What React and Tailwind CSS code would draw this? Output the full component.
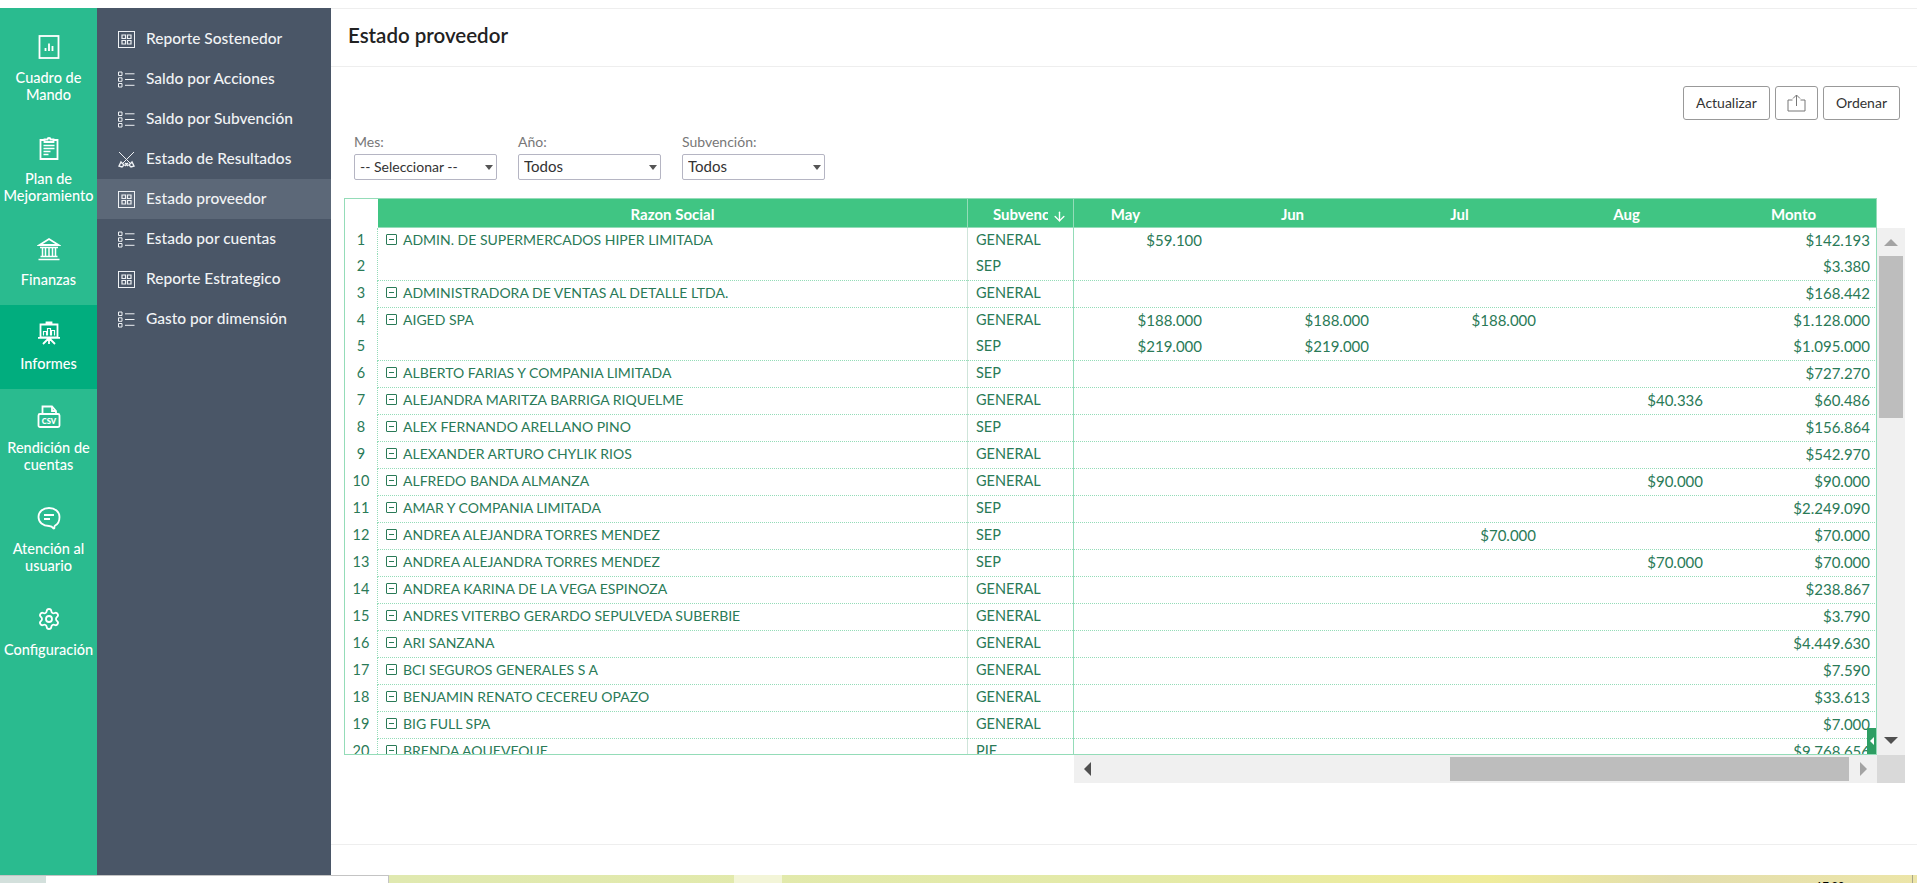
import { ArrowDown, Settings } from 'lucide-react'

// -- Data --------------------------------------------------------------

const NAV = [
  { label: ['Cuadro de', 'Mando'], icon: 'chart' },
  { label: ['Plan de', 'Mejoramiento'], icon: 'clipboard' },
  { label: ['Finanzas'], icon: 'bank' },
  { label: ['Informes'], icon: 'board', active: true },
  { label: ['Rendición de', 'cuentas'], icon: 'csv' },
  { label: ['Atención al', 'usuario'], icon: 'chat' },
  { label: ['Configuración'], icon: 'gear' },
]

const SUBMENU = [
  { label: 'Reporte Sostenedor', icon: 'grid' },
  { label: 'Saldo por Acciones', icon: 'list' },
  { label: 'Saldo por Subvención', icon: 'list' },
  { label: 'Estado de Resultados', icon: 'swords' },
  { label: 'Estado proveedor', icon: 'grid', active: true },
  { label: 'Estado por cuentas', icon: 'list' },
  { label: 'Reporte Estrategico', icon: 'grid' },
  { label: 'Gasto por dimensión', icon: 'list' },
]

// name, subvencion, may, jun, jul, aug, monto, line under the row
const ROWS = [
  ['ADMIN. DE SUPERMERCADOS HIPER LIMITADA', 'GENERAL', '$59.100', '', '', '', '$142.193', false],
  ['', 'SEP', '', '', '', '', '$3.380', true],
  ['ADMINISTRADORA DE VENTAS AL DETALLE LTDA.', 'GENERAL', '', '', '', '', '$168.442', true],
  ['AIGED SPA', 'GENERAL', '$188.000', '$188.000', '$188.000', '', '$1.128.000', false],
  ['', 'SEP', '$219.000', '$219.000', '', '', '$1.095.000', true],
  ['ALBERTO FARIAS Y COMPANIA LIMITADA', 'SEP', '', '', '', '', '$727.270', true],
  ['ALEJANDRA MARITZA BARRIGA RIQUELME', 'GENERAL', '', '', '', '$40.336', '$60.486', true],
  ['ALEX FERNANDO ARELLANO PINO', 'SEP', '', '', '', '', '$156.864', true],
  ['ALEXANDER ARTURO CHYLIK RIOS', 'GENERAL', '', '', '', '', '$542.970', true],
  ['ALFREDO BANDA ALMANZA', 'GENERAL', '', '', '', '$90.000', '$90.000', true],
  ['AMAR Y COMPANIA LIMITADA', 'SEP', '', '', '', '', '$2.249.090', true],
  ['ANDREA ALEJANDRA TORRES MENDEZ', 'SEP', '', '', '$70.000', '', '$70.000', true],
  ['ANDREA ALEJANDRA TORRES MENDEZ', 'SEP', '', '', '', '$70.000', '$70.000', true],
  ['ANDREA KARINA DE LA VEGA ESPINOZA', 'GENERAL', '', '', '', '', '$238.867', true],
  ['ANDRES VITERBO GERARDO SEPULVEDA SUBERBIE', 'GENERAL', '', '', '', '', '$3.790', true],
  ['ARI SANZANA', 'GENERAL', '', '', '', '', '$4.449.630', true],
  ['BCI SEGUROS GENERALES S A', 'GENERAL', '', '', '', '', '$7.590', true],
  ['BENJAMIN RENATO CECEREU OPAZO', 'GENERAL', '', '', '', '', '$33.613', true],
  ['BIG FULL SPA', 'GENERAL', '', '', '', '', '$7.000', true],
  ['BRENDA AQUEVEQUE', 'PIE', '', '', '', '', '$9.768.656', true],
]

// -- Icons -------------------------------------------------------------

function NavIcon({ name }) {
  if (name === 'gear') return <Settings size={24} strokeWidth={1.8} className="text-white" />
  const common = { width: 24, height: 24, viewBox: '0 0 24 24', fill: 'none', stroke: 'white', strokeWidth: 1.8 }
  if (name === 'chart') return (
    <svg {...common}>
      <rect x="2.500" y="1" width="19" height="22" />
      <path d="M8.500 16v-3M12 16V8.500M15.500 16v-5" />
    </svg>
  )
  if (name === 'clipboard') return (
    <svg {...common}>
      <path d="M7.500 4H3.500v19h17V4h-4" />
      <path d="M7.500 6V3.500h3a1.500 1.500 0 0 1 3 0h3V6z" />
      <path d="M6.500 9.500h11M6.500 12.500h11M6.500 15.500h7M6.500 18.500h5" strokeWidth="1.400" />
    </svg>
  )
  if (name === 'bank') return (
    <svg {...common}>
      <path d="M2.500 8 12 2l9.500 6z" />
      <path d="M3 10.500h18M5.500 11v8M8.500 11v8M12 11v8M15.500 11v8M18.500 11v8M3.500 19.500h17M1.500 22.500h21" strokeWidth="1.500" />
    </svg>
  )
  if (name === 'board') return (
    <svg {...common}>
      <path d="M9.500 3.500V1.500h5v2M3.500 3.500h17v13h-17zM1 16.800h22M12 17v6M11.500 17.500 6 23M12.500 17.500 18 23" />
      <path d="M6.500 14.500v-4h3v4M10.500 14.500v-7h3v7M14.500 14.500v-5h3v5" strokeWidth="1.200" />
    </svg>
  )
  if (name === 'csv') return (
    <svg {...common}>
      <path d="M5.500 9V1.500H15L19 6v3" />
      <path d="M15 1.500V6h4" />
      <rect x="1.500" y="9" width="21" height="13" rx="1.500" />
      <text x="12" y="18.500" textAnchor="middle" fontSize="7.500" fontWeight="800" fill="white" stroke="none" fontFamily="Lato, sans-serif">CSV</text>
    </svg>
  )
  return (
    <svg {...common}>
      <path d="M12 2C6 2 1.500 5.500 1.500 11S6 20 12 20c1.800 0 3 .2 4.500 2.500.6 .2 1-.2 .9-1 -.1-.8 0-1.500 .8-2C21 18 22.500 15 22.500 11 22.500 5.500 18 2 12 2z" />
      <path d="M7 9h10M7 13h6" />
    </svg>
  )
}

function SubIcon({ name }) {
  const common = { width: 17, height: 17, viewBox: '0 0 17 17', fill: 'none', stroke: '#eef1f4', strokeWidth: 1 }
  if (name === 'grid') return (
    <svg {...common}>
      <rect x="0.500" y="0.500" width="16" height="16" />
      <path d="M4 4h3.500v3.500H4zM9.500 4H13v3.500H9.500zM4 9.500h3.500V13H4zM9.500 9.500H13V13H9.500z" strokeWidth="1.200" />
    </svg>
  )
  if (name === 'list') return (
    <svg {...common}>
      <path d="M.500 1h3.500v3.500H.500zM.500 6.800h3.500v3.500H.500zM.500 12.500h3.500V16H.500z" />
      <path d="M7 2.800h9.500M7 8.500h9.500M7 14.300h9.500" />
    </svg>
  )
  return (
    <svg {...common}>
      <path d="M1 1l11 11M16 1 5 12" />
      <path d="M3 11l3 3-2 2-3-1zM14 11l-3 3 2 2 3-1zM7 12l3 3M10 12l-3 3" strokeWidth="1.400" />
    </svg>
  )
}

function ExpandBox() {
  return (
    <svg width="11" height="11" viewBox="0 0 11 11" fill="none" stroke="#2a7a57" strokeWidth="1" className="shrink-0">
      <rect x="0.500" y="0.500" width="10" height="10" rx="0.500" />
      <path d="M3 5.500h5" />
    </svg>
  )
}

// -- Sidebars ----------------------------------------------------------

function MainNav() {
  return (
    <nav className="w-[97px] shrink-0 bg-[#2abb8f] pt-[11px] text-white">
      {NAV.map(item => (
        <div
          key={item.label[0]}
          className={`flex flex-col items-center pt-[17px] pb-[17px] ${item.active ? 'bg-[#01ad7e]' : ''}`}
        >
          <div className="h-[22px] flex items-center justify-center"><NavIcon name={item.icon} /></div>
          <div className="mt-[11px] text-[14.500px] font-medium leading-[17px] text-center whitespace-nowrap">
            {item.label.map(l => <div key={l}>{l}</div>)}
          </div>
        </div>
      ))}
    </nav>
  )
}

function SubNav() {
  return (
    <aside className="w-[234px] shrink-0 bg-[#4a5667] pt-[11px] text-[#f1f3f5]">
      {SUBMENU.map(item => (
        <div
          key={item.label}
          className={`h-[40px] flex items-center pl-[21px] gap-[11px] text-[15.500px] font-medium ${item.active ? 'bg-[#5c6878]' : ''}`}
        >
          <SubIcon name={item.icon} />
          <span>{item.label}</span>
        </div>
      ))}
    </aside>
  )
}

// -- Filters -----------------------------------------------------------

function Filter({ label, value, small }) {
  return (
    <label className="block w-[143px]">
      <span className="block text-[14px] leading-[15px] text-[#777]">{label}</span>
      <span className="relative block mt-[5px]">
        <select
          defaultValue={value}
          className={`block w-full h-[26px] appearance-none bg-white border border-[#b5b5c3] rounded-[2px] text-[#333] pb-[2px] pl-[5px] ${small ? 'text-[14px]' : 'text-[15px]'}`}
        >
          <option>{value}</option>
        </select>
        <span className="absolute right-[4px] top-[11px] w-0 h-0 border-x-[4.500px] border-x-transparent border-t-[5px] border-t-[#555]" />
      </span>
    </label>
  )
}

// -- Table -------------------------------------------------------------

function Table() {
  return (
    <div className="mt-[18px] ml-[13px] w-[1561px]">
      <div className="flex h-[557px] overflow-hidden">
        {/* frozen columns */}
        <div className="w-[730px] shrink-0 border-[1.500px] border-[#94dcb8] overflow-hidden">
          <div className="flex h-[28.500px]">
            <div className="w-[33px] shrink-0 bg-white" />
            <div className="flex-1 bg-[#40c583] text-white font-bold text-[15px] pt-[2px] flex items-center justify-center border-b-[1.500px] border-[#94dcb8]">Razon Social</div>
            <div className="w-[106px] shrink-0 bg-[#40c583] text-white font-bold text-[15px] pt-[2px] flex items-center pl-[25px] pr-[5px] border-l-[1.500px] border-b-[1.500px] border-[#94dcb8]">
              <span className="w-[55px] overflow-hidden whitespace-nowrap">Subvención</span>
              <ArrowDown size={15} strokeWidth={2.200} className="ml-[4px] mt-[5px] shrink-0" />
            </div>
          </div>
          {ROWS.map((r, i) => (
            <div key={i} className={`flex text-[14px] text-[#2a7a57] ${r[7] ? 'h-[27px]' : 'h-[26px]'}`}>
              <div className="w-[33px] shrink-0 text-center leading-[24px] text-[14.500px] border-r border-dotted border-[#94dcb8]">{i + 1}</div>
              <div className={`flex-1 flex items-center gap-[6px] pl-[8px] pb-[2px] whitespace-nowrap h-full ${r[7] ? 'border-b border-dotted border-[#94dcb8]' : ''}`}>
                {r[0] && <ExpandBox />}
                <span>{r[0]}</span>
              </div>
              <div className={`w-[106px] shrink-0 flex items-center pl-[8px] pb-[2px] text-[14.500px] border-l border-[#cfe5da] ${r[7] ? 'border-b-[1px] border-b-[#94dcb8] [border-bottom-style:dotted]' : ''}`}>{r[1]}</div>
            </div>
          ))}
        </div>

        {/* scrolling columns */}
        <div className="w-[803px] shrink-0 border-r-[1.500px] border-t-[1.500px] border-b-[1.500px] border-[#94dcb8] overflow-hidden relative">
          <div className="-ml-[32px] w-[835px]">
            <div className="grid grid-cols-[167px_167px_167px_167px_167px] h-[28.500px] bg-[#40c583] text-white font-bold text-[15px] pt-[2px] border-b-[1.500px] border-[#94dcb8]">
              {['May', 'Jun', 'Jul', 'Aug', 'Monto'].map(m => (
                <div key={m} className="flex items-center justify-center">{m}</div>
              ))}
            </div>
            {ROWS.map((r, i) => (
              <div
                key={i}
                className={`grid grid-cols-[167px_167px_167px_167px_167px] text-[15px] text-[#2a7a57] text-right ${r[7] ? 'h-[27px] border-b border-dotted border-[#94dcb8]' : 'h-[26px]'}`}
              >
                {[2, 3, 4, 5, 6].map(c => (
                  <div key={c} className="pr-[7px] leading-[24px]">{r[c]}</div>
                ))}
              </div>
            ))}
          </div>
          <div className="absolute right-0 bottom-0 w-[9px] h-[26px] bg-[#2e9e63] flex items-center justify-center">
            <span className="w-0 h-0 border-y-[4px] border-y-transparent border-r-[4px] border-r-white" />
          </div>
        </div>

        {/* vertical scrollbar */}
        <div className="w-[28px] shrink-0 mt-[30px] bg-[#f0f0f0] flex flex-col items-center">
          <div className="h-[28px] flex items-center justify-center">
            <span className="w-0 h-0 border-x-[7px] border-x-transparent border-b-[7px] border-b-[#a3a3a3]" />
          </div>
          <div className="w-[24px] h-[162px] bg-[#bdbdbd]" />
          <div className="flex-1 w-full flex items-end justify-center pb-[11px]">
            <span className="w-0 h-0 border-x-[7px] border-x-transparent border-t-[7px] border-t-[#505050]" />
          </div>
        </div>
      </div>

      {/* horizontal scrollbar */}
      <div className="flex h-[28px] ml-[730px]">
        <div className="w-[803px] bg-[#f0f0f0] flex items-center">
          <span className="ml-[10px] w-0 h-0 border-y-[7px] border-y-transparent border-r-[7px] border-r-[#505050]" />
          <div className="ml-[359px] w-[399px] h-[24px] bg-[#bdbdbd]" />
          <span className="ml-[11px] w-0 h-0 border-y-[7px] border-y-transparent border-l-[7px] border-l-[#a3a3a3]" />
        </div>
        <div className="w-[28px] bg-[#d9d9d9]" />
      </div>
    </div>
  )
}

// -- Page --------------------------------------------------------------

export default function App() {
  return (
    <div className="w-[1917px] h-[883px] overflow-hidden bg-white pt-[8px] flex flex-col [font-family:Lato,sans-serif]">
      <div className="flex h-[867px]">
        <MainNav />
        <SubNav />
        <main className="flex-1 min-w-0 flex flex-col border-t border-[#eeeeee]">
          <header className="h-[58px] shrink-0 border-b border-[#eeeeee] flex items-center pl-[17px] pb-[4px]">
            <h1 className="text-[20.500px] font-semibold text-[#222]">Estado proveedor</h1>
          </header>
          <div className="flex-1 min-h-0">
            <div className="flex justify-end gap-[5px] pr-[17px] mt-[19px] text-[14px] text-[#333]">
              <button className="h-[34px] w-[87px] pb-[2px] border border-[#999] rounded-[3px]">Actualizar</button>
              <button className="h-[34px] w-[43px] border border-[#999] rounded-[3px] flex items-center justify-center">
                <svg width="19" height="18" viewBox="0 0 19 18" fill="none" stroke="#777" strokeWidth="1">
                  <path d="M5.500 6H1v11h17V6h-4.500M9.500 12V1M6 4.500l3.500-3.500L13 4.500" />
                </svg>
              </button>
              <button className="h-[34px] w-[77px] pb-[2px] border border-[#999] rounded-[3px]">Ordenar</button>
            </div>
            <div className="flex gap-[21px] ml-[23px] mt-[14px]">
              <Filter label="Mes:" value="-- Seleccionar --" small />
              <Filter label="Año:" value="Todos" />
              <Filter label="Subvención:" value="Todos" />
            </div>
            <Table />
          </div>
          <div className="h-[31px] shrink-0 border-t border-[#eeeeee]" />
        </main>
      </div>

      {/* strip of the window below */}
      <div className="h-[8px] flex overflow-hidden">
        <div className="w-[46px] bg-[#d3e0dc] border-t border-[#c4c4c4]" />
        <div className="w-[343px] bg-white border-t border-r border-[#c4c4c4]" />
        <div className="flex-1 flex bg-[linear-gradient(90deg,#e0e9b0,#e4eaa8_50%,#efec9b_72%,#e3deae_84%,#ece5a8)] relative">
          <div className="ml-[345px] w-[48px] bg-[#f3f5d8]" />
          <span className="absolute left-[1427px] top-[4px] text-[11px] leading-[13px] text-black">17:20</span>
          <span className="absolute left-[1523px] top-0 w-px h-full bg-[#a8a68a]" />
        </div>
      </div>
    </div>
  )
}
